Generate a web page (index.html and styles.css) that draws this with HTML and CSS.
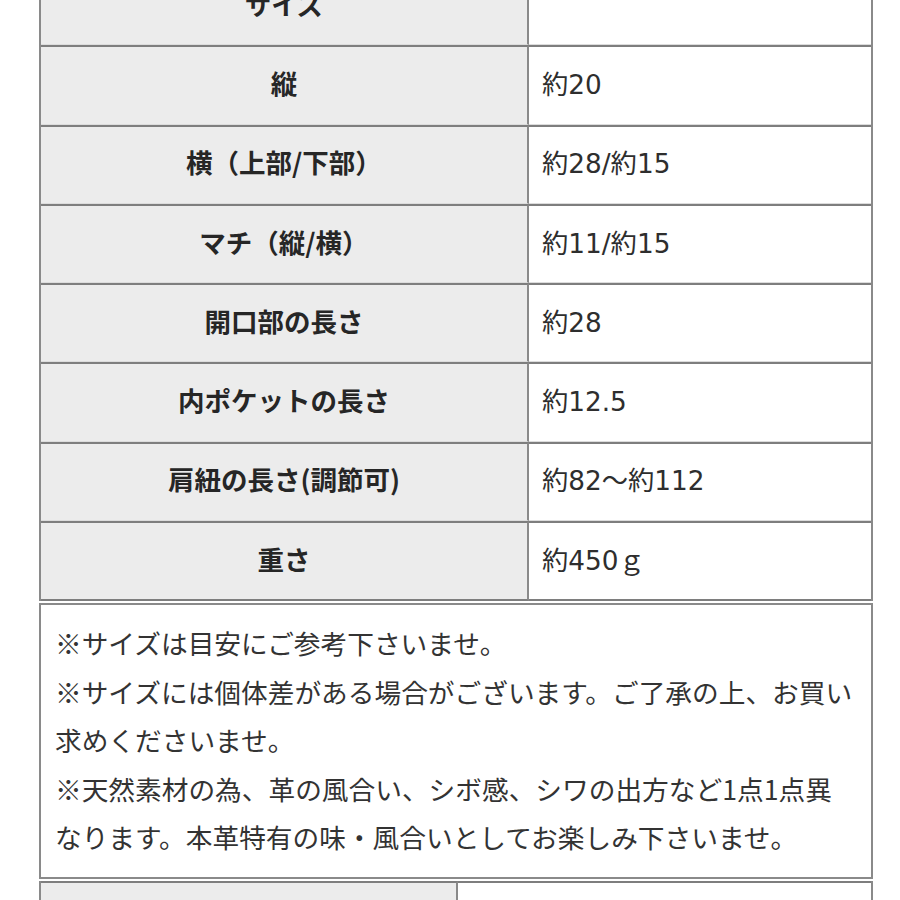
FILE: index.html
```html
<!DOCTYPE html>
<html lang="ja">
<head>
<meta charset="utf-8">
<link rel="stylesheet" href="styles.css">
</head>
<body>
<div class="page">
  <table class="spec">
    <tr><th class="label">サイズ</th><td class="value"></td></tr>
    <tr><th class="label">縦</th><td class="value">約20</td></tr>
    <tr><th class="label">横（上部/下部）</th><td class="value">約28/約15</td></tr>
    <tr><th class="label">マチ（縦/横）</th><td class="value">約11/約15</td></tr>
    <tr><th class="label">開口部の長さ</th><td class="value">約28</td></tr>
    <tr><th class="label">内ポケットの長さ</th><td class="value">約12.5</td></tr>
    <tr><th class="label">肩紐の長さ(調節可)</th><td class="value">約82〜約112</td></tr>
    <tr><th class="label">重さ</th><td class="value">約450ｇ</td></tr>
  </table>
  <div class="notes">
    ※サイズは目安にご参考下さいませ。<br>
    ※サイズには個体差がある場合がございます。ご了承の上、お買い<br>
    求めくださいませ。<br>
    ※天然素材の為、革の風合い、シボ感、シワの出方など1点1点異<br>
    なります。本革特有の味・風合いとしてお楽しみ下さいませ。
  </div>
  <table class="spec next">
    <tr><th class="label narrow"></th><td class="value"></td></tr>
  </table>
</div>
</body>
</html>
```
FILE: styles.css
```css
html, body {
  margin: 0;
  padding: 0;
  background: #ffffff;
}
body {
  font-family: "Noto Sans CJK JP", "Noto Sans", sans-serif;
  color: #333333;
}
.page {
  margin: -34px 0 0 39px;
  width: 834px;
}
.spec {
  width: 834px;
  border-collapse: separate;
  border-spacing: 0;
  border-left: 2px solid #8a8a8a;
  border-right: 2px solid #8a8a8a;
  table-layout: fixed;
}
.spec th, .spec td {
  height: 70.3px;
  font-size: 26.5px;
  padding: 0 0 6px 0;
  border-top: 2px solid #7e7e7e;
  border-bottom: 1px solid #dcdcdc;
}
.spec tr:last-child th, .spec tr:last-child td {
  border-bottom: 2px solid #7e7e7e;
}
.label {
  width: 486px;
  background: #ececec;
  font-weight: bold;
  color: #262626;
  text-align: center;
  border-right: 2px solid #8a8a8a;
}
.value {
  background: #ffffff;
  text-align: left;
  padding-left: 13px !important;
  color: #2e2e2e;
  font-family: "DejaVu Sans", "Noto Sans CJK JP", sans-serif;
  font-size: 26.3px !important;
}
.notes {
  margin-top: 2px;
  border: 2px solid #8a8a8a;
  padding: 14px 14px 15px 14px;
  font-size: 26.7px;
  line-height: 48.5px;
  color: #333333;
  white-space: nowrap;
}
.next {
  margin-top: 2px;
}
.next .narrow {
  width: 415px;
}
```
